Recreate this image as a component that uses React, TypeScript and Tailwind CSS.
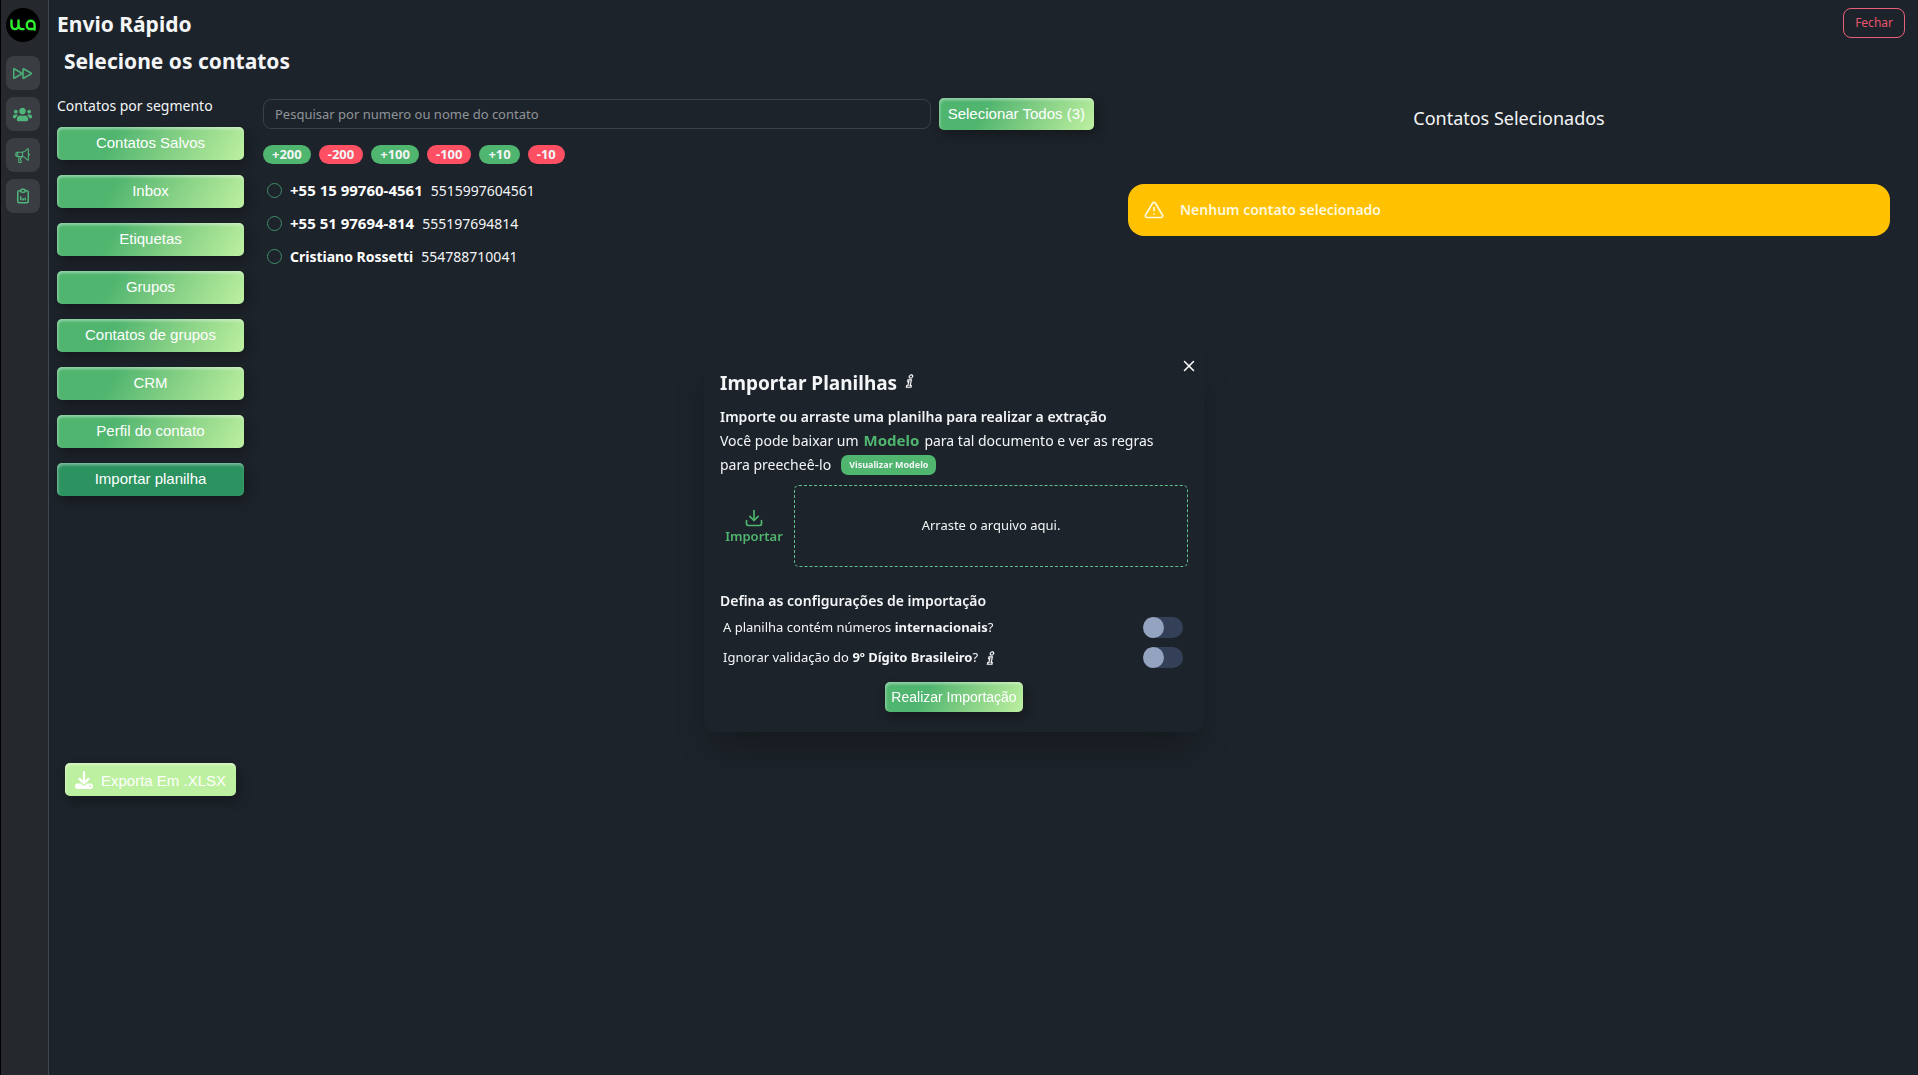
import { useState } from 'react';
import type { ButtonHTMLAttributes, ReactNode } from 'react';
import { BsFastForward } from 'react-icons/bs';
import { FaUsers } from 'react-icons/fa';
import { FaDownload } from 'react-icons/fa6';
import { FiAlertTriangle, FiDownload, FiX } from 'react-icons/fi';
import { IoMegaphoneOutline } from 'react-icons/io5';
import { LiaInfoSolid } from 'react-icons/lia';
import { TbClipboardData } from 'react-icons/tb';

const segments = [
  'Contatos Salvos',
  'Inbox',
  'Etiquetas',
  'Grupos',
  'Contatos de grupos',
  'CRM',
  'Perfil do contato',
  'Importar planilha',
];

const steps = ['+200', '-200', '+100', '-100', '+10', '-10'];

const contacts = [
  { name: '+55 15 99760-4561', phone: '5515997604561', bold: 'text-[15px]' },
  { name: '+55 51 97694-814', phone: '555197694814', bold: 'text-[15px]' },
  { name: 'Cristiano Rossetti', phone: '554788710041', bold: 'text-sm' },
];

const navItems = [
  { label: 'Envio rápido', icon: <BsFastForward size={19} strokeWidth={0.4} /> },
  { label: 'Grupos', icon: <FaUsers size={19} /> },
  { label: 'Campanhas', icon: <IoMegaphoneOutline size={17} /> },
  { label: 'Relatórios', icon: <TbClipboardData size={18} /> },
];

function Logo() {
  return (
    <svg viewBox="0 0 34 34" className="size-[34px]" role="img" aria-label="Logo">
      <circle cx="17" cy="17" r="17" fill="#000" />
      <g fill="none" stroke="#2fee2f" strokeWidth="2.4" strokeLinecap="round" strokeLinejoin="round">
        <path d="M5.500 12.500v5.100a3.500 3.500 0 0 0 7 0v-5.100" />
        <path d="M12.500 17.600a3.500 3.500 0 0 0 3.500 3.500h1.600" />
        <path d="M28.600 21.500v-4.800a3.900 3.900 0 0 0-7.800 0v1a3.300 3.300 0 0 0 3.300 3.300h4.500" />
      </g>
    </svg>
  );
}

type GlossyProps = ButtonHTMLAttributes<HTMLButtonElement> & { tone?: 'light' | 'dark' | 'flat'; children: ReactNode };

function GlossyButton({ tone = 'light', className = '', children, ...rest }: GlossyProps) {
  const tones = {
    light: 'bg-linear-120 from-[#4fb56f] from-30% to-[#bdf0a0]',
    dark: 'bg-[#2b9260]',
    flat: 'bg-[#bdf0a0]',
  };
  return (
    <button
      type="button"
      className={`rounded-[5px] font-['Liberation_Sans',Arial,sans-serif] text-white shadow-[3px_5px_12px_rgba(0,0,0,0.3),inset_1px_2px_3px_rgba(255,255,255,0.4)] ${tones[tone]} ${className}`}
      {...rest}
    >
      {children}
    </button>
  );
}

function InfoMark() {
  return (
    <button type="button" aria-label="Mais informações" className="-skew-x-12">
      <LiaInfoSolid size={18} stroke="currentColor" strokeWidth={0.3} />
    </button>
  );
}

function Toggle({ id }: { id: string }) {
  return (
    <input
      id={id}
      type="checkbox"
      role="switch"
      className="h-[21px] w-10 cursor-pointer appearance-none rounded-full bg-[#334058] before:block before:size-[21px] before:rounded-full before:bg-[#94a3bf] checked:bg-[#2b9260] checked:before:ml-auto"
    />
  );
}

function ImportDialog({ onClose }: { onClose: () => void }) {
  return (
    <div className="pointer-events-none fixed inset-0 flex items-center justify-center pr-[10px]">
      <section
        role="dialog"
        aria-labelledby="import-title"
        className="pointer-events-auto relative w-[500px] max-w-full rounded-xl bg-[#1d232a] px-4 pt-[23px] pb-5 shadow-[0_24px_36px_-12px_rgba(0,0,0,0.3)]"
      >
        <button type="button" aria-label="Fechar janela" onClick={onClose} className="absolute top-[13px] right-1.5 text-white">
          <FiX size={18} />
        </button>
        <div className="flex items-center gap-1">
          <h3 id="import-title" className="text-[19px] leading-8 font-bold">
            Importar Planilhas
          </h3>
          <span className="mb-1 flex">
            <InfoMark />
          </span>
        </div>
        <p className="mt-[7px] text-sm leading-[22px] font-semibold">Importe ou arraste uma planilha para realizar a extração</p>
        <div className="text-sm leading-6">
          <p className="flex flex-wrap items-baseline gap-x-[5px]">
            <span>Você pode baixar um</span>
            <a href="#modelo" className="text-[15px] leading-6 font-bold text-[#4fb56f]">
              Modelo
            </a>
            <span>para tal documento e ver as regras</span>
          </p>
          <div className="flex items-center gap-2.5">
            <span>para preecheê-lo</span>
            <button type="button" className="h-5 rounded-[7px] bg-[#4fb56f] px-2 text-[9px] leading-5 font-bold">
              Visualizar Modelo
            </button>
          </div>
        </div>
        <div className="mt-2 flex items-center">
          <button type="button" className="flex w-[68px] flex-col items-center text-[13px] leading-4 font-semibold text-[#4fb56f]">
            <FiDownload size={20} />
            Importar
          </button>
          <div className="ml-1.5 grid h-[82px] flex-1 place-items-center rounded-[5px] border border-dashed border-[#5fc090] text-[13px]">
            Arraste o arquivo aqui.
          </div>
        </div>
        <h4 className="mt-[22px] text-sm leading-6 font-semibold">Defina as configurações de importação</h4>
        <div className="flex h-[30px] items-center justify-between pr-[5px] pl-[3px] text-[13px]">
          <label htmlFor="international">
            A planilha contém números <b>internacionais</b>?
          </label>
          <Toggle id="international" />
        </div>
        <div className="flex h-[30px] items-center justify-between pr-[5px] pl-[3px] text-[13px]">
          <span className="flex items-center gap-1">
            <label htmlFor="ninth-digit">
              Ignorar validação do <b>9º Dígito Brasileiro</b>?
            </label>
            <InfoMark />
          </span>
          <Toggle id="ninth-digit" />
        </div>
        <div className="mt-[9px] flex justify-center">
          <GlossyButton className="h-[30px] px-1.5 text-sm">Realizar Importação</GlossyButton>
        </div>
      </section>
    </div>
  );
}

export default function App() {
  const [active, setActive] = useState('Importar planilha');
  const open = active === 'Importar planilha';

  return (
    <div className="flex min-h-screen bg-[#1d232a] font-['Noto_Sans',sans-serif] text-[#f3f5f7]">
      <nav aria-label="Principal" className="flex w-[49px] shrink-0 flex-col items-center gap-[7px] border-r border-l border-r-[#41464d] border-l-black bg-[#25282c] pt-2 pr-1">
        <div className="mb-[7px]">
          <Logo />
        </div>
        {navItems.map((item) => (
          <button
            key={item.label}
            type="button"
            aria-label={item.label}
            className="grid size-[34px] place-items-center rounded-lg bg-[#3a3d41] text-[#4fb57b]"
          >
            {item.icon}
          </button>
        ))}
      </nav>

      <main className="flex min-w-0 flex-1 flex-col pl-2">
        <header className="flex items-start justify-between pt-2 pr-[13px]">
          <div>
            <h1 className="text-[21px] leading-8 font-bold">Envio Rápido</h1>
            <h2 className="mt-[5px] pl-[7px] text-[21px] leading-8 font-bold">Selecione os contatos</h2>
          </div>
          <button type="button" className="h-[30px] rounded-lg border border-[#e8607a] px-[11px] text-xs text-[#e8556f]">
            Fechar
          </button>
        </header>

        <div className="mt-[17px] grid grid-cols-[187px_minmax(0,850fr)_minmax(0,796fr)] pr-7">
          <aside>
            <h3 className="text-sm leading-6">Contatos por segmento</h3>
            <div className="mt-[9px] flex flex-col gap-[15px]">
              {segments.map((name) => (
                <GlossyButton
                  key={name}
                  tone={name === active ? 'dark' : 'light'}
                  className="h-[33px] text-[15px]"
                  onClick={() => setActive(name)}
                >
                  {name}
                </GlossyButton>
              ))}
            </div>
            <GlossyButton tone="flat" className="mt-[267px] ml-2 flex h-[33px] items-center gap-2 px-2.5 pt-1 text-[15px]">
              <FaDownload size={18} className="-mt-1" />
              Exporta Em .XLSX
            </GlossyButton>
          </aside>

          <section className="pl-[19px]">
            <div className="mt-[4px] flex items-center gap-2">
              <input
                type="text"
                aria-label="Pesquisar contatos"
                placeholder="Pesquisar por numero ou nome do contato"
                className="h-[30px] min-w-0 flex-1 rounded-lg border border-[#3a4047] bg-transparent px-[11px] text-[13px] placeholder:text-[#8f9499]"
              />
              <GlossyButton className="h-8 px-[9px] text-[15px]">Selecionar Todos (3)</GlossyButton>
            </div>
            <div className="mt-[15px] flex gap-2">
              {steps.map((s) => (
                <button
                  key={s}
                  type="button"
                  className={
                    s.startsWith('+')
                      ? 'h-[19px] rounded-full bg-[#4fb56f] px-[9px] text-[13px] leading-[19px] font-bold'
                      : 'h-[19px] rounded-full bg-[#ff4f63] px-[9px] text-[13px] leading-[19px] font-bold'
                  }
                >
                  {s}
                </button>
              ))}
            </div>
            <ul className="mt-[10px]">
              {contacts.map((c) => (
                <li key={c.phone}>
                  <label className="flex h-[33px] items-center pl-1 text-sm">
                    <input type="checkbox" className="mr-2 size-[15px] appearance-none rounded-full border border-[#3f8d68] checked:bg-[#4fb56f]" />
                    <span className={`${c.bold} font-bold text-white`}>{c.name}</span>
                    <span className="ml-2">{c.phone}</span>
                  </label>
                </li>
              ))}
            </ul>
          </section>

          <section className="pl-[34px]">
            <h2 className="mt-2.5 text-center text-lg leading-7">Contatos Selecionados</h2>
            <div role="alert" className="mt-[52px] flex h-[52px] items-center gap-4 rounded-2xl bg-[#ffc100] px-4 text-sm font-semibold text-[#fff8dc]">
              <FiAlertTriangle size={20} />
              Nenhum contato selecionado
            </div>
          </section>
        </div>
      </main>

      {open && <ImportDialog onClose={() => setActive('')} />}
    </div>
  );
}
